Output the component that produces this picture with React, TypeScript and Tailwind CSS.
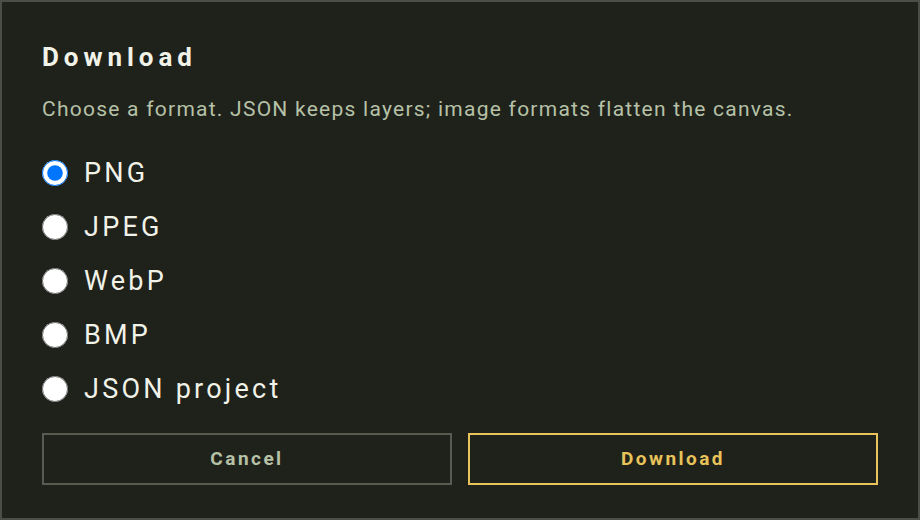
import { useState } from 'react';

const formats = ['PNG', 'JPEG', 'WebP', 'BMP', 'JSON project'];

export default function App() {
  const [selected, setSelected] = useState('PNG');

  return (
    <div className="h-[520px] w-full border-2 border-[#4b4e45] bg-[#1f211b] px-10 pt-[39px] font-['Roboto',sans-serif]">
      <h2 className="text-[26px] font-bold leading-8 tracking-[0.19em] text-[#f1f2e8]">Download</h2>
      <p className="mt-[22px] text-[21px] leading-7 tracking-[1.25px] text-[#b6c1a7]">
        Choose a format. JSON keeps layers; image formats flatten the canvas.
      </p>

      <div className="mt-[23px] flex flex-col">
        {formats.map((f) => (
          <label key={f} className="flex h-[54px] items-center gap-[16px] cursor-pointer">
            <input
              type="radio"
              name="format"
              checked={selected === f}
              onChange={() => setSelected(f)}
              className="h-[26px] w-[26px] shrink-0"
            />
            <span className="text-[27px] leading-none tracking-[0.12em] text-[#f1f2e8]">{f}</span>
          </label>
        ))}
      </div>

      <div className="mt-[17px] grid grid-cols-2 gap-4">
        <button className="h-[52px] border-2 border-[#585c50] text-[19px] font-bold tracking-[0.13em] text-[#b6c1a7]">
          Cancel
        </button>
        <button className="h-[52px] border-2 border-[#e8c35a] text-[19px] font-bold tracking-[0.13em] text-[#e8c35a]">
          Download
        </button>
      </div>
    </div>
  );
}
